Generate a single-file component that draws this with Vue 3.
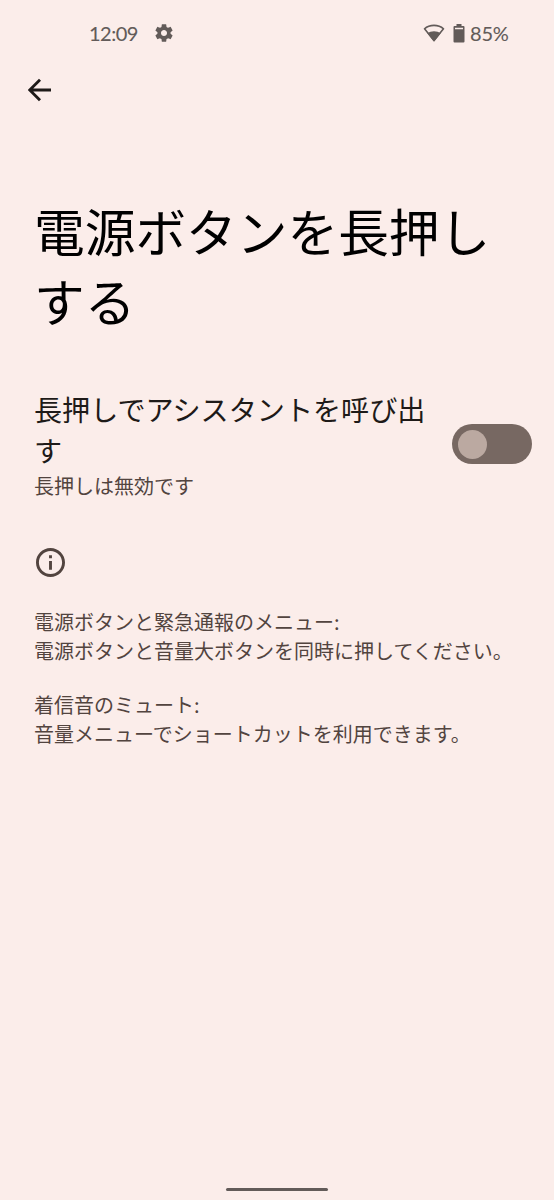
<script setup>
import { ref } from "vue";

const enabled = ref(false);

const notes = [
  {
    heading: "電源ボタンと緊急通報のメニュー:",
    body: "電源ボタンと音量大ボタンを同時に押してください。"
  },
  {
    heading: "着信音のミュート:",
    body: "音量メニューでショートカットを利用できます。"
  }
];
</script>

<template>
  <div class="screen">
    <header class="status-bar">
      <div class="status-left">
        <span class="clock">12:09</span>
        <svg class="gear" viewBox="0 0 24 24">
          <path d="M19.14 12.94c.04-.3.06-.61.06-.94 0-.32-.02-.64-.07-.94l2.03-1.58c.18-.14.23-.41.12-.61l-1.92-3.32c-.12-.22-.37-.29-.59-.22l-2.39.96c-.5-.38-1.03-.7-1.62-.94l-.36-2.54c-.04-.24-.24-.41-.48-.41h-3.84c-.24 0-.43.17-.47.41l-.36 2.54c-.59.24-1.13.57-1.62.94l-2.39-.96c-.22-.08-.47 0-.59.22L2.74 8.87c-.12.21-.08.47.12.61l2.03 1.58c-.05.3-.09.63-.09.94s.02.64.07.94l-2.03 1.58c-.18.14-.23.41-.12.61l1.92 3.32c.12.22.37.29.59.22l2.39-.96c.5.38 1.03.7 1.62.94l.36 2.54c.05.24.24.41.48.41h3.84c.24 0 .44-.17.47-.41l.36-2.54c.59-.24 1.13-.56 1.62-.94l2.39.96c.22.08.47 0 .59-.22l1.92-3.32c.12-.22.07-.47-.12-.61l-2.01-1.58zM12 15.3c-1.820 0-3.300-1.480-3.300-3.300s1.480-3.300 3.300-3.300 3.300 1.480 3.300 3.300-1.480 3.300-3.300 3.300z" />
        </svg>
      </div>
      <div class="status-right">
        <svg class="wifi" viewBox="0 0 22 18">
          <path class="wifi-outline" d="M1.500 4.800C6.500 .2 15.500 .2 20.500 4.800L11 16.500z" />
          <path d="M4.300 9.200C8 6.500 14 6.500 17.700 9.200L11 17.700z" />
        </svg>
        <svg class="battery" viewBox="0 0 12 19">
          <path fill-rule="evenodd" d="M3.500 0h5v2H10.500Q11.500 2 11.500 3V17.500Q11.500 18.500 10.500 18.500H1.500Q.5 18.500 .5 17.500V3Q.5 2 1.500 2H3.500zM2 3.700V5.300H10V3.700z" />
        </svg>
        <span class="percent">85%</span>
      </div>
    </header>

    <nav class="toolbar">
      <button class="back" type="button" aria-label="戻る">
        <svg viewBox="0 0 24 24">
          <path d="M23 12H2M12 1.700L1.700 12L12 22.300" />
        </svg>
      </button>
    </nav>

    <h1 class="title">電源ボタンを長押しする</h1>

    <section class="preference">
      <div class="preference-text">
        <h2>長押しでアシスタントを呼び出す</h2>
        <p>長押しは無効です</p>
      </div>
      <button
        class="switch"
        :class="{ on: enabled }"
        type="button"
        role="switch"
        :aria-checked="enabled"
        @click="enabled = !enabled"
      >
        <span class="thumb"></span>
      </button>
    </section>

    <section class="info">
      <svg class="info-icon" viewBox="2 2 20 20">
        <path d="M11 7h2v2h-2zm0 4h2v6h-2zm1-9C6.480 2 2 6.480 2 12s4.480 10 10 10 10-4.480 10-10S17.520 2 12 2zm0 18c-4.410 0-8-3.590-8-8s3.590-8 8-8 8 3.590 8 8-3.590 8-8 8z" />
      </svg>
      <div v-for="note in notes" :key="note.heading" class="note">
        <p>{{ note.heading }}</p>
        <p>{{ note.body }}</p>
      </div>
    </section>

    <footer class="gesture-bar">
      <div class="handle"></div>
    </footer>
  </div>
</template>

<style>
body {
  margin: 0;
  background: #fbedea;
}
</style>

<style scoped>
.screen {
  display: flex;
  flex-direction: column;
  box-sizing: border-box;
  width: 554px;
  height: 1200px;
  overflow: hidden;
  background: #fbedea;
  color: #1e1a18;
  font-family: "Noto Sans CJK JP", sans-serif;
}

h1,
h2,
p {
  margin: 0;
  font-weight: 400;
}

button {
  padding: 0;
  border: none;
  background: none;
  cursor: pointer;
}

svg {
  display: block;
}

.status-bar {
  display: flex;
  justify-content: space-between;
  align-items: center;
  height: 66px;
  padding: 0 45px 0 89px;
  color: #625b59;
  fill: #625b59;
  font-family: Lato, sans-serif;
  font-size: 20px;
  -webkit-text-stroke: 0.1px #625b59;
}

.status-left,
.status-right {
  display: flex;
  align-items: center;
}

.clock,
.percent {
  padding-bottom: 1px;
  white-space: nowrap;
}

.clock {
  width: 49px;
  letter-spacing: -0.5px;
}

.gear {
  width: 22px;
  height: 22px;
  margin-left: 15px;
}

.wifi {
  width: 22px;
  height: 18px;
}

.wifi-outline {
  fill: none;
  stroke: #625b59;
  stroke-width: 1.6;
  stroke-linejoin: round;
}

.battery {
  width: 12px;
  height: 19px;
  margin: 0 5px 0 8px;
}

.percent {
  width: 39px;
  letter-spacing: -0.2px;
}

.toolbar {
  display: flex;
  align-items: center;
  height: 48px;
  padding-left: 28px;
}

.back svg {
  width: 24px;
  height: 24px;
  fill: none;
  stroke: #1e1a18;
  stroke-width: 2.9;
}

.title {
  margin: 81px 34px 0;
  color: #000;
  font-size: 50.7px;
  line-height: 70px;
}

.preference {
  display: flex;
  justify-content: space-between;
  align-items: center;
  margin-top: 53px;
  padding: 0 22px 0 34px;
}

.preference-text {
  width: 400px;
}

.preference-text h2 {
  font-size: 28.1px;
  line-height: 41px;
}

.preference-text p {
  margin-top: 1px;
  color: #52443f;
  font-size: 20px;
  line-height: 29px;
}

.switch {
  display: flex;
  align-items: center;
  box-sizing: border-box;
  width: 80px;
  height: 40px;
  padding: 0 6px;
  border-radius: 20px;
  background: #776862;
}

.switch.on {
  justify-content: flex-end;
}

.thumb {
  width: 29px;
  height: 29px;
  border-radius: 50%;
  background: #bba9a1;
}

.info {
  margin-top: 48px;
  padding: 0 34px;
  color: #52443f;
  font-size: 20px;
  line-height: 29px;
}

.info-icon {
  width: 29px;
  height: 29px;
  margin: 0 0 30px 2px;
  fill: #52443f;
}

.note + .note {
  margin-top: 25px;
}

.note p {
  white-space: nowrap;
}

.gesture-bar {
  display: flex;
  justify-content: center;
  margin-top: auto;
  padding-bottom: 9px;
}

.handle {
  width: 102px;
  height: 3px;
  border-radius: 2px;
  background: #625b59;
}
</style>
